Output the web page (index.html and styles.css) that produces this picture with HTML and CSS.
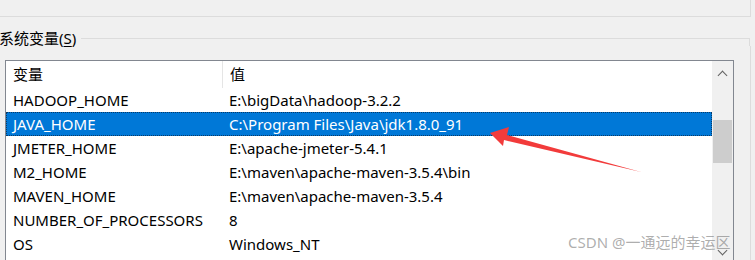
FILE: index.html
```html
<!DOCTYPE html>
<html lang="zh-CN">
<head>
    <meta charset="UTF-8">
    <title>系统变量</title>
    <link rel="stylesheet" href="styles.css">
</head>
<body>
    <div class="top-panel"></div>

    <div class="group-title">
        <span class="group-label">系统变量(<u>S</u>)</span>
        <span class="group-line"></span>
    </div>

    <div class="group-body">
        <div class="list">
            <div class="list-main">
                <div class="row header">
                    <span class="col-name">变量</span>
                    <span class="col-value">值</span>
                </div>
                <div class="row"><span class="col-name">HADOOP_HOME</span><span class="col-value">E:\bigData\hadoop-3.2.2</span></div>
                <div class="row selected"><span class="col-name">JAVA_HOME</span><span class="col-value">C:\Program Files\Java\jdk1.8.0_91</span></div>
                <div class="row"><span class="col-name">JMETER_HOME</span><span class="col-value">E:\apache-jmeter-5.4.1</span></div>
                <div class="row"><span class="col-name">M2_HOME</span><span class="col-value">E:\maven\apache-maven-3.5.4\bin</span></div>
                <div class="row"><span class="col-name">MAVEN_HOME</span><span class="col-value">E:\maven\apache-maven-3.5.4</span></div>
                <div class="row"><span class="col-name">NUMBER_OF_PROCESSORS</span><span class="col-value">8</span></div>
                <div class="row"><span class="col-name">OS</span><span class="col-value">Windows_NT</span></div>
            </div>
            <div class="scrollbar">
                <span class="arrow up"></span>
                <span class="thumb"></span>
                <span class="arrow down"></span>
            </div>
        </div>
    </div>

    <svg class="pointer" width="755" height="260" viewBox="0 0 755 260">
        <polygon points="490,133 509,127 507,135 641,172 504,140 503,146" fill="#f23b3b"/>
    </svg>

    <div class="watermark">CSDN @一通远的幸运区</div>
</body>
</html>
```

FILE: styles.css
```css
body {
    margin: 0;
    width: 755px;
    height: 260px;
    overflow: hidden;
    background: #f0f0f0;
    font-family: "Noto Sans", "Noto Sans CJK SC", sans-serif;
    font-size: 15px;
    color: #000;
    position: relative;
}
.top-panel {
    width: 750px;
    height: 16px;
    border-right: 1px solid #dcdcdc;
    border-bottom: 1px solid #dcdcdc;
}
.group-title {
    display: flex;
    width: 751px;
    height: 16px;
    margin-top: 13px;
    margin-left: -1px;
}
.group-label {
    line-height: 16px;
    padding-right: 5px;
}
.group-label u {
    text-decoration-thickness: 1px;
    text-underline-offset: 2px;
}
.group-line {
    flex: 1;
    margin-top: 8px;
    border-top: 1px solid #dcdcdc;
    border-right: 1px solid #dcdcdc;
}
.group-body {
    width: 750px;
    height: 200px;
    padding-top: 14px;
    border-right: 1px solid #dcdcdc;
}
.list {
    display: flex;
    margin-left: 5px;
    width: 727px;
    height: 200px;
    border: 1px solid #828790;
    border-bottom: none;
    background: #fff;
}
.list-main {
    width: 706px;
}
.row {
    display: flex;
    height: 24px;
    line-height: 24px;
    white-space: nowrap;
}
.row.header {
    height: 27px;
    line-height: 27px;
}
.col-name {
    width: 209px;
    padding-left: 7px;
    flex-shrink: 0;
}
.col-value {
    padding-left: 7px;
}
.header .col-name {
    border-right: 1px solid #e5e5e5;
}
.selected {
    background: #0078d7;
    color: #fff;
    outline: 1px dotted #0a3a66;
    outline-offset: -1px;
}
.scrollbar {
    width: 21px;
    background: #f0f0f0;
    position: relative;
    display: flex;
    flex-direction: column;
    align-items: center;
}
.arrow {
    width: 6px;
    height: 6px;
    border-left: 1.5px solid #606060;
    border-top: 1.5px solid #606060;
}
.arrow.up {
    margin-top: 11px;
    transform: rotate(45deg);
}
.arrow.down {
    position: absolute;
    top: 186px;
    transform: rotate(225deg);
}
.thumb {
    width: 19px;
    height: 43px;
    margin-top: 41px;
    background: #cdcdcd;
}
.pointer {
    position: absolute;
    left: 0;
    top: 0;
}
.watermark {
    position: absolute;
    left: 568px;
    top: 231px;
    font-size: 15px;
    color: rgba(120, 120, 120, 0.6);
    white-space: nowrap;
}
```
